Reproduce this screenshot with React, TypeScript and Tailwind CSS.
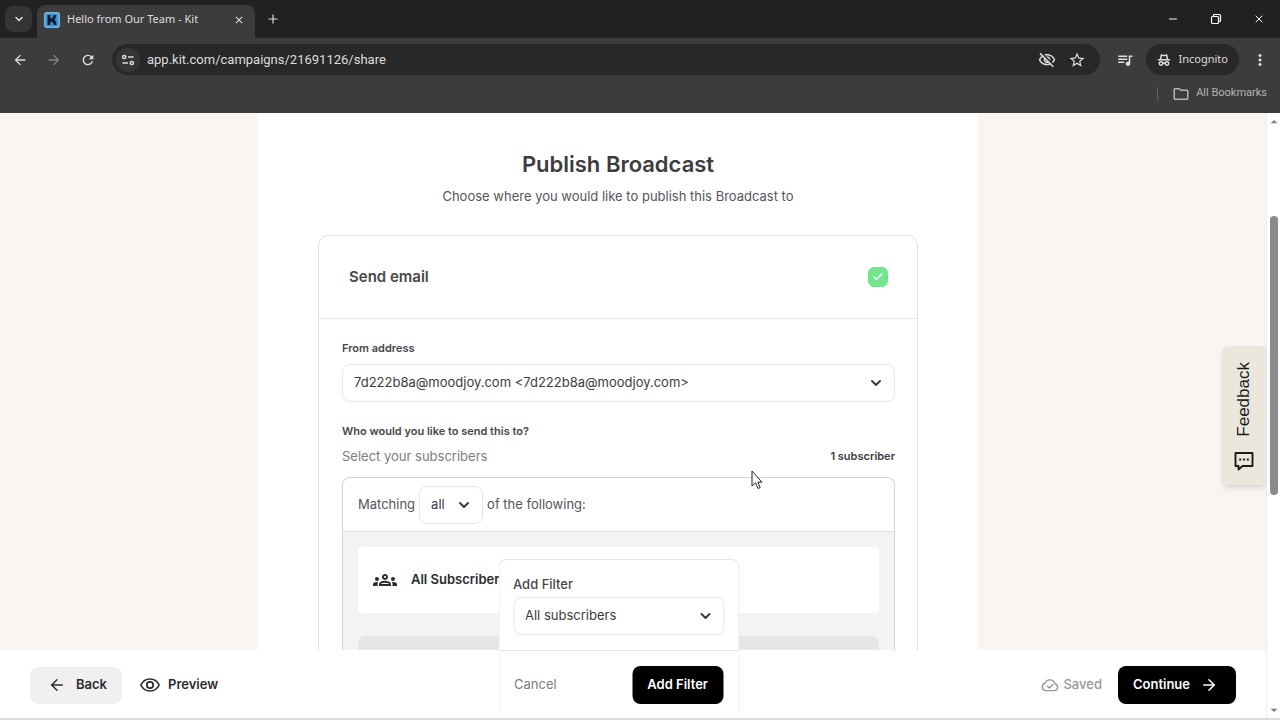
import React, { useState } from 'react';
import {
  MdArrowBack,
  MdArrowDropDown,
  MdArrowDropUp,
  MdArrowForward,
  MdClose,
  MdMoreVert,
  MdOutlineFolder,
  MdOutlineGroups,
  MdOutlineVisibilityOff,
  MdQueueMusic,
  MdRefresh,
  MdStarOutline,
} from 'react-icons/md';
import { ArrowLeft, ArrowRight, Check, ChevronDown, Minus, Plus, X } from 'lucide-react';

interface SelectProps {
  id: string;
  options: string[];
  className?: string;
}

function Select({ id, options, className = '' }: SelectProps) {
  return (
    <div className={`relative ${className}`}>
      <select
        id={id}
        className="block w-full h-[38px] pl-[11px] pr-8 appearance-none rounded-lg border border-[#e6e6e6] bg-white text-[13px] text-[#3c3c3f] outline-none"
      >
        {options.map((option) => (
          <option key={option}>{option}</option>
        ))}
      </select>
      <ChevronDown
        className="absolute top-[11px] right-[11px] w-4 h-4 text-[#3c3c3f] pointer-events-none"
        strokeWidth={3}
      />
    </div>
  );
}

function KitLogo() {
  return (
    <svg className="w-4 h-4 shrink-0" viewBox="0 0 16 16">
      <rect width="16" height="16" rx="3" fill="#6fb9e8" />
      <rect x="1.5" y="1.5" width="13" height="13" rx="2" fill="#3d93cf" />
      <path d="M5 3v10M5.4 8.4C8.6 8.4 10.6 6.6 10.8 3M6.5 8C9 8 11 9.5 11.2 13" fill="none" stroke="#0c1c2c" strokeWidth="2.8" />
    </svg>
  );
}

function SiteInfoIcon() {
  return (
    <svg className="w-4 h-4" viewBox="0 0 16 16" fill="none" stroke="currentColor" strokeWidth="1.5">
      <circle cx="4.2" cy="5" r="1.6" />
      <path d="M8 5h5.500M2.500 11h5.500" />
      <circle cx="11.8" cy="11" r="1.6" />
    </svg>
  );
}

function IncognitoIcon() {
  return (
    <svg className="w-[14px] h-[14px]" viewBox="0 0 16 16" fill="none" stroke="currentColor" strokeWidth="1.7">
      <path d="M4 7.300l1-5 1.500.4q1.500.5 3 0L11 2.300l1 5M1 7.700h14" />
      <circle cx="4.600" cy="12" r="2" />
      <circle cx="11.400" cy="12" r="2" />
      <path d="M6.600 11.800q1.400-.8 2.800 0" />
    </svg>
  );
}

function RestoreIcon() {
  return (
    <svg className="w-3 h-3" viewBox="0 0 12 12" fill="none" stroke="currentColor" strokeWidth="1.2">
      <rect x="1.5" y="3.500" width="7" height="7" rx="1" />
      <path d="M3.500 3.500V2.500a1 1 0 0 1 1-1h5a1 1 0 0 1 1 1v5a1 1 0 0 1-1 1h-1" />
    </svg>
  );
}

function EyeIcon() {
  return (
    <svg className="w-5 h-5" viewBox="0 0 20 20" fill="none" stroke="currentColor" strokeWidth="1.7">
      <path d="M.9 10C2.700 6.200 6 4 10 4S17.300 6.200 19.100 10C17.300 13.800 14 16 10 16S2.700 13.800 .9 10Z" />
      <circle cx="10" cy="10" r="3.200" />
    </svg>
  );
}

function CloudCheckIcon() {
  return (
    <svg className="w-[18px] h-[18px]" viewBox="0 0 18 18" fill="none" stroke="currentColor" strokeWidth="1.4" strokeLinecap="round" strokeLinejoin="round">
      <path d="M4.800 14.600a3.700 3.700 0 0 1-.6-7.300 5 5 0 0 1 9.600.4 3.500 3.500 0 0 1-.2 6.900Z" />
      <path d="M6.500 10.200l1.900 1.800 3.400-3.600" />
    </svg>
  );
}

function ChatIcon() {
  return (
    <svg className="w-5 h-5" viewBox="0 0 20 20">
      <path d="M1.500 2h17v13h-10l-4 3.500V15h-3Z" fill="none" stroke="currentColor" strokeWidth="1.9" strokeLinejoin="round" />
      <path d="M5.200 7.600h2v2h-2zM9 7.600h2v2H9zM12.800 7.600h2v2h-2z" fill="currentColor" />
    </svg>
  );
}

function BrowserChrome() {
  return (
    <header className="shrink-0 bg-[#3c3c3c] text-[#dedede] font-['Noto_Sans',sans-serif]">
      <div className="flex h-[38px] bg-[#212121]">
        <div className="flex items-center w-[37px] pl-[5px]">
          <button aria-label="Search tabs" className="flex items-center justify-center w-[27px] h-[26px] rounded-lg bg-[#353535]">
            <ChevronDown className="w-3 h-3" strokeWidth={3} />
          </button>
        </div>
        <div className="flex items-center self-end w-[218px] h-[33px] pl-[7px] pr-2 pb-1 rounded-t-lg bg-[#3c3c3c]">
          <KitLogo />
          <span className="flex-1 ml-[7px] text-[11px] whitespace-nowrap">Hello from Our Team - Kit</span>
          <button aria-label="Close tab" className="flex items-center justify-center w-4 h-4">
            <MdClose className="w-3 h-3" />
          </button>
        </div>
        <button aria-label="New tab" className="flex items-center justify-center w-9">
          <Plus className="w-[14px] h-[14px]" />
        </button>
        <div className="flex items-center gap-[31px] ml-auto pr-[15px] text-white">
          <button aria-label="Minimize"><Minus className="w-3 h-3" /></button>
          <button aria-label="Restore"><RestoreIcon /></button>
          <button aria-label="Close window"><X className="w-3 h-3" /></button>
        </div>
      </div>

      <div className="flex items-center h-[43px]">
        <div className="flex items-center justify-between w-[112px] pl-3 pr-4">
          <button aria-label="Back to previous page"><MdArrowBack className="w-4 h-4" /></button>
          <button aria-label="Forward" className="text-[#858585]"><MdArrowForward className="w-4 h-4" /></button>
          <button aria-label="Reload"><MdRefresh className="w-4 h-4" /></button>
        </div>
        <div className="flex flex-1 items-center h-[31px] pl-1 pr-[14px] rounded-full bg-[#282828]">
          <button aria-label="Site information" className="flex items-center justify-center w-6 h-6 rounded-full bg-[#353535]">
            <SiteInfoIcon />
          </button>
          <input
            aria-label="Address"
            defaultValue="app.kit.com/campaigns/21691126/share"
            className="flex-1 min-w-0 ml-[7px] bg-transparent font-[Roboto,sans-serif] text-[13px] text-[#dedede] outline-none"
          />
          <button aria-label="Third-party cookies blocked"><MdOutlineVisibilityOff className="w-[18px] h-[18px]" /></button>
          <button aria-label="Bookmark this tab" className="ml-3"><MdStarOutline className="w-[18px] h-[18px]" /></button>
        </div>
        <button aria-label="Media controls" className="ml-4"><MdQueueMusic className="w-[18px] h-[18px]" /></button>
        <button className="flex items-center gap-2 h-[31px] ml-3 px-[11px] rounded-full bg-[#282828] text-[11px]">
          <IncognitoIcon />
          Incognito
        </button>
        <button aria-label="Menu" className="ml-3 mr-[11px]"><MdMoreVert className="w-[18px] h-[18px]" /></button>
      </div>

      <div className="flex items-center justify-end h-8 pr-[13px] pb-[7px]">
        <div className="w-px h-[14px] mr-[14px] bg-[#606060]" />
        <button className="flex items-center gap-[6px] font-[Roboto,sans-serif] text-[11px] text-[#b4b4b4]">
          <MdOutlineFolder className="w-[18px] h-[18px]" />
          All Bookmarks
        </button>
      </div>
    </header>
  );
}

function RecipientFilters() {
  return (
    <div className="mt-[11px] rounded-t-lg border border-b-0 border-[#d4d4d4] overflow-hidden">
      <div className="flex items-center gap-1 h-[53px] px-[15px] text-[13px] text-[#55555a]">
        <label htmlFor="match">Matching</label>
        <Select id="match" options={['all', 'any']} className="w-16" />
        <span>of the following:</span>
      </div>
      <div className="h-[320px] px-[15px] pt-[15px] border-t border-[#dedede] bg-[#f3f3f3]">
        <div className="flex items-center gap-[14px] h-[66px] px-[15px] rounded-sm bg-white text-[#2b2b2e]">
          <MdOutlineGroups className="w-6 h-6" />
          <span className="text-[13px] font-semibold">All Subscribers</span>
        </div>
        <div className="h-16 mt-[23px] rounded-lg bg-[#e6e6e6]" />
      </div>
    </div>
  );
}

function PublishForm() {
  const [sendEmail, setSendEmail] = useState(true);

  return (
    <div className="w-[720px] max-w-full mx-auto px-[60px] pt-[37px] bg-white">
      <h1 className="text-[22px] leading-7 font-semibold text-center text-[#3c3c3f]">Publish Broadcast</h1>
      <p className="mt-2 text-[13px] leading-5 text-center text-[#55555a]">
        Choose where you would like to publish this Broadcast to
      </p>

      <section className="mt-[29px] rounded-t-[10px] border border-[#e0e0e0]">
        <div className="flex items-center justify-between h-[83px] pl-[30px] pr-[29px] border-b border-[#e8e8e8]">
          <label htmlFor="send-email" className="text-[15px] font-semibold text-[#47474a]">Send email</label>
          <div className="relative w-5 h-5">
            <input
              id="send-email"
              type="checkbox"
              checked={sendEmail}
              onChange={(e) => setSendEmail(e.target.checked)}
              className="block w-5 h-5 appearance-none rounded-md border border-[#6fe38d] checked:bg-[#73e690]"
            />
            {sendEmail && (
              <Check className="absolute inset-1 w-3 h-3 text-white pointer-events-none" strokeWidth={3} />
            )}
          </div>
        </div>

        <div className="pl-[23px] pr-[22px] pt-[19px]">
          <label htmlFor="from" className="block text-[11px] leading-5 font-semibold text-[#47474a]">From address</label>
          <Select id="from" options={['7d222b8a@moodjoy.com <7d222b8a@moodjoy.com>']} className="mt-[6px]" />

          <h2 className="mt-[19px] text-[11px] leading-5 font-semibold text-[#47474a]">Who would you like to send this to?</h2>
          <div className="flex items-center justify-between mt-[5px] leading-5">
            <span className="text-[13px] text-[#7d7d80]">Select your subscribers</span>
            <span className="text-[11px] font-semibold text-[#3c3c3f]">1 subscriber</span>
          </div>
          <RecipientFilters />
        </div>
      </section>
    </div>
  );
}

function AddFilterPopover() {
  return (
    <div className="absolute bottom-[5px] left-1/2 -translate-x-1/2 w-[241px] rounded-t-lg border border-b-0 border-[#e8e8e8] bg-white">
      <div className="px-[14px] pt-[14px] pb-[15px] border-b border-[#e3e3e3]">
        <label htmlFor="filter" className="block mb-[3px] text-[13px] leading-5 font-medium text-[#47474a]">Add Filter</label>
        <Select id="filter" options={['All subscribers']} />
      </div>
      <div className="flex items-center justify-between h-[62px] px-[15px] pt-[15px] pb-[9px]">
        <button className="text-[13px] text-[#7d7d80]">Cancel</button>
        <button className="h-[38px] px-[15px] rounded-lg bg-black text-[13px] font-semibold text-white">Add Filter</button>
      </div>
    </div>
  );
}

function ActionBar() {
  return (
    <footer className="flex items-center shrink-0 h-[68px] px-[30px] pt-[2px] bg-white text-[13px] font-semibold text-[#2b2b2e]">
      <button className="flex items-center gap-[10px] h-[37px] pl-[18px] pr-[15px] rounded-lg bg-[#f0f0f0]">
        <ArrowLeft className="w-[18px] h-[18px]" />
        Back
      </button>
      <button className="flex items-center gap-2 ml-[18px]">
        <EyeIcon />
        Preview
      </button>
      <span className="flex items-center gap-1 ml-auto font-medium text-[#97979a]">
        <CloudCheckIcon />
        Saved
      </span>
      <button className="flex items-center gap-[10px] h-[38px] ml-4 pl-[15px] pr-[18px] rounded-lg bg-black text-white">
        Continue
        <ArrowRight className="w-[18px] h-[18px]" />
      </button>
    </footer>
  );
}

function ScrollRail() {
  return (
    <div className="flex flex-col items-center justify-between shrink-0 w-[14px] pt-px bg-white border-l border-[#efefef] text-[#7d7d7d]">
      <MdArrowDropUp className="w-4 h-4" />
      <div className="w-2 h-[279px] mb-[121px] rounded-full bg-[#8a8a8a]" />
      <MdArrowDropDown className="w-4 h-4" />
    </div>
  );
}

export default function App() {
  return (
    <div className="flex flex-col h-screen overflow-hidden bg-white font-[Inter,sans-serif]">
      <BrowserChrome />
      <div className="flex flex-1 min-h-0 border-b-2 border-[#dcdcdc]">
        <div className="relative flex flex-col flex-1 min-w-0">
          <main className="flex-1 min-h-0 overflow-hidden pr-[30px] bg-[#f9f5f2]">
            <PublishForm />
          </main>
          <ActionBar />
          <div className="absolute bottom-0 left-0 right-[29px]">
            <AddFilterPopover />
          </div>
          <button className="absolute right-0 top-[233px] flex flex-col items-center gap-[14px] w-11 h-[139px] pt-4 rounded-l-md bg-[#ebe7dd] text-[#1c1c1c] shadow-md">
            <span className="[writing-mode:vertical-rl] rotate-180 text-[17px] leading-5 font-['Liberation_Sans',sans-serif]">Feedback</span>
            <ChatIcon />
          </button>
        </div>
        <ScrollRail />
      </div>
      {/* mouse pointer */}
      <svg className="absolute left-[751px] top-[470px] w-3 h-5" viewBox="0 0 12 20">
        <path d="M1 1v15l3.500-3.200L7 18.500l2.200-1-2.400-5.300H11Z" fill="#fff" stroke="#222" strokeWidth="1" />
      </svg>
    </div>
  );
}
